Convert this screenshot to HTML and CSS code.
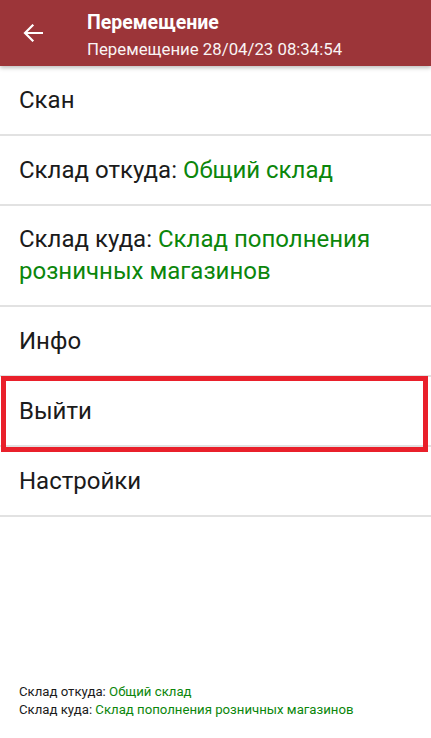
FILE: index.html
```html
<!DOCTYPE html>
<html lang="ru">
<head>
  <meta charset="UTF-8">
  <title>Перемещение</title>
  <link rel="stylesheet" href="styles.css">
</head>
<body>

  <header class="topbar">
    <svg class="back" width="20" height="18" viewBox="0 0 20 18">
      <path d="M19 9H2.5M9.5 1.5L2 9l7.5 7.5" fill="none" stroke="#fff" stroke-width="2.2" stroke-linecap="square"/>
    </svg>
    <div class="titles">
      <div class="title">Перемещение</div>
      <div class="subtitle">Перемещение 28/04/23 08:34:54</div>
    </div>
  </header>

  <ul class="menu">
    <li>Скан</li>
    <li>Склад откуда: <span class="val">Общий склад</span></li>
    <li class="tall">Склад куда: <span class="val">Склад пополнения розничных магазинов</span></li>
    <li>Инфо</li>
    <li class="marked">Выйти</li>
    <li>Настройки</li>
  </ul>

  <footer class="info">
    <div>Склад откуда: <span class="val">Общий склад</span></div>
    <div>Склад куда: <span class="val">Склад пополнения розничных магазинов</span></div>
  </footer>

</body>
</html>
```

FILE: styles.css
```css
html, body { height: 100%; }
body {
  margin: 0;
  font-family: Roboto, "Noto Sans", sans-serif;
  background: #fff;
  color: #1b1b1b;
  display: flex;
  flex-direction: column;
}
.topbar {
  height: 66px;
  background: #9c3539;
  color: #fff;
  display: flex;
  align-items: center;
  box-shadow: 0 2px 4px rgba(0,0,0,0.25);
  position: relative;
  z-index: 1;
  flex-shrink: 0;
}
.back { margin-left: 23px; margin-right: 44px; }
.titles { padding-top: 3px; }
.title { font-size: 19.5px; font-weight: bold; line-height: 28px; }
.subtitle { font-size: 16.8px; line-height: 24px; opacity: 0.95; }

.menu { list-style: none; margin: 0; padding: 0; }
.menu li {
  font-size: 24px;
  line-height: 32px;
  padding: 18px 19px 18px;
  border-bottom: 2px solid #e2e2e2;
}
.menu li.tall { padding-top: 17px; padding-bottom: 18px; }
.val { color: #0b860b; }
.menu li.marked {
  position: relative;
}
.menu li.marked::after {
  content: "";
  position: absolute;
  left: 1px;
  right: 3px;
  top: -1px;
  bottom: -7px;
  border: 5px solid #e9202b;
}
.info {
  margin-top: auto;
  padding: 0 19px 19px;
  font-size: 13.2px;
  line-height: 18px;
}
```
